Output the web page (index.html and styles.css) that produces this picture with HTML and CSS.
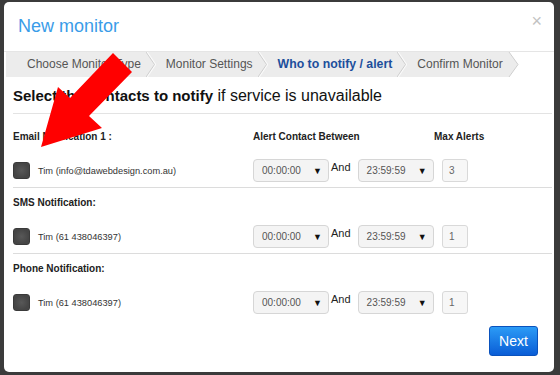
FILE: index.html
```html
<!DOCTYPE html>
<html lang="en">
<head>
    <meta charset="UTF-8">
    <title>New monitor</title>
    <link rel="stylesheet" href="styles.css">
</head>
<body>

    <div class="modal">
        <div class="modal-header">
            <h4 class="modal-title">New monitor</h4>
            <span class="close">&times;</span>
        </div>

        <!-- wizard steps -->
        <div class="crumbs">
            <span class="step first">Choose Monitor Type</span>
            <svg class="sep" width="10" height="25" viewBox="0 0 10 25"><polyline points="1,0 9.5,12.5 1,25" class="hi"/><polyline points="0,0 8.5,12.5 0,25" class="lo"/></svg>
            <span class="step">Monitor Settings</span>
            <svg class="sep" width="10" height="25" viewBox="0 0 10 25"><polyline points="1,0 9.5,12.5 1,25" class="hi"/><polyline points="0,0 8.5,12.5 0,25" class="lo"/></svg>
            <span class="step active">Who to notify / alert</span>
            <svg class="sep" width="10" height="25" viewBox="0 0 10 25"><polyline points="1,0 9.5,12.5 1,25" class="hi"/><polyline points="0,0 8.5,12.5 0,25" class="lo"/></svg>
            <span class="step">Confirm Monitor</span>
            <svg class="tip" width="11" height="25" viewBox="0 0 11 25"><polygon points="0,0 1,0 10,12.5 1,25 0,25"/><polyline points="1,0 10,12.5 1,25" class="lo"/></svg>
        </div>

        <div class="modal-body">
            <h3 class="lead"><b>Select the contacts to notify</b> if service is unavailable</h3>

            <div class="section first">
                <div class="cols labels">
                    <span>Email Notification 1 :</span>
                    <span>Alert Contact Between</span>
                    <span>Max Alerts</span>
                </div>
                <div class="cols controls">
                    <label class="who"><span class="check"></span>Tim (info@tdawebdesign.com.au)</label>
                    <div class="times">
                        <span class="select">00:00:00<i>&#9660;</i></span>
                        <span class="and">And</span>
                        <span class="select">23:59:59<i>&#9660;</i></span>
                    </div>
                    <span class="num">3</span>
                </div>
            </div>

            <div class="section">
                <div class="cols labels">
                    <span>SMS Notification:</span>
                </div>
                <div class="cols controls">
                    <label class="who"><span class="check"></span>Tim (61 438046397)</label>
                    <div class="times">
                        <span class="select">00:00:00<i>&#9660;</i></span>
                        <span class="and">And</span>
                        <span class="select">23:59:59<i>&#9660;</i></span>
                    </div>
                    <span class="num">1</span>
                </div>
            </div>

            <div class="section last">
                <div class="cols labels">
                    <span>Phone Notification:</span>
                </div>
                <div class="cols controls">
                    <label class="who"><span class="check"></span>Tim (61 438046397)</label>
                    <div class="times">
                        <span class="select">00:00:00<i>&#9660;</i></span>
                        <span class="and">And</span>
                        <span class="select">23:59:59<i>&#9660;</i></span>
                    </div>
                    <span class="num">1</span>
                </div>
            </div>

            <div class="modal-footer">
                <button class="btn">Next</button>
            </div>
        </div>
    </div>

    <!-- red pointer drawn over the dialog -->
    <svg class="arrow" width="560" height="375" viewBox="0 0 560 375">
        <polygon points="113,53 132,72 89,116 102,128 41,147 58,87 70,98"/>
    </svg>

</body>
</html>
```

FILE: styles.css
```css
* {
    box-sizing: border-box;
}

body {
    margin: 0;
    width: 560px;
    height: 375px;
    overflow: hidden;
    background-color: #3b3b3b;
    font-family: "Liberation Sans", Arial, sans-serif;
    color: #222;
}

.modal {
    width: 550px;
    height: 370px;
    margin: 2px 0 0 4px;
    background-color: #fff;
    border-radius: 5px;
}

.modal-header {
    height: 50px;
    padding: 0 12px 0 14px;
    border-bottom: 1px solid #e5e5e5;
    display: flex;
    justify-content: space-between;
    align-items: center;
}

.modal-title {
    margin: 0;
    font-size: 18px;
    font-weight: normal;
    line-height: 49px;
    color: #3a9ce8;
}

.close {
    font-size: 18px;
    color: #c2c2c2;
    margin-bottom: 10px;
}

/* wizard steps */
.crumbs {
    display: flex;
    width: fit-content;
    height: 25px;
    margin-left: 2px;
}

.step {
    background-color: #ececec;
    line-height: 25px;
    font-size: 12px;
    color: #555;
    padding: 0 5px 0 10px;
    white-space: nowrap;
}

.step.first { padding-left: 21px; }

.step.active {
    font-weight: bold;
    font-size: 12.3px;
    color: #1d4f9c;
}

.sep {
    display: block;
    background-color: #ececec;
}

.sep polyline, .tip polyline {
    fill: none;
}

.hi { stroke: #fafafa; stroke-width: 1.5; }
.lo { stroke: #cfcfcf; stroke-width: 1; }

.tip { display: block; }
.tip polygon { fill: #ececec; }

.modal-body {
    padding: 0 2px 0 9px;
}

.lead {
    margin: 0;
    padding: 8px 0 6px;
    line-height: 22px;
    font-size: 16px;
    font-weight: normal;
    color: #111;
    border-bottom: 1px solid #e3e3e3;
}

.lead b { font-size: 15px; }

.section {
    padding: 8px 0 5px;
    border-bottom: 1px solid #dcdcdc;
}

.section.first { padding-top: 16px; }
.section.last { border-bottom: none; }

.cols {
    display: grid;
    grid-template-columns: 240px 181px auto;
}

.labels {
    line-height: 14px;
    font-size: 10px;
    font-weight: bold;
    color: #222;
}

.controls {
    margin-top: 15px;
    height: 23px;
    align-items: center;
}

.who {
    display: flex;
    align-items: center;
    gap: 8px;
    font-size: 9.25px;
    color: #333;
}

.check {
    width: 17px;
    height: 17px;
    border-radius: 3px;
    border: 1px solid #3a3a3a;
    background: radial-gradient(circle, #585858 0, #454545 70%);
}

.times {
    display: flex;
    height: 23px;
}

.select {
    width: 76px;
    height: 23px;
    padding: 0 6px 0 8px;
    display: flex;
    justify-content: space-between;
    align-items: center;
    background-color: #f4f4f4;
    border: 1px solid #d6d6d6;
    border-radius: 4px;
    font-size: 10px;
    color: #555;
}

.select i {
    font-style: normal;
    font-size: 9px;
    color: #111;
}

.and {
    margin: 0 7px 0 2px;
    line-height: 16px;
    font-size: 11px;
    color: #222;
}

.num {
    width: 26px;
    height: 23px;
    margin-left: 8px;
    padding-left: 6px;
    line-height: 21px;
    background-color: #f7f7f7;
    border: 1px solid #d9d9d9;
    border-radius: 3px;
    font-size: 10px;
    color: #666;
}

.modal-footer {
    padding: 7px 14px 0 0;
    text-align: right;
}

.btn {
    width: 49px;
    height: 30px;
    padding: 0;
    background: linear-gradient(#2b9bf6, #0a5dd6);
    border: 1px solid #0a52bd;
    border-radius: 3px;
    font-family: "Liberation Sans", Arial, sans-serif;
    font-size: 14px;
    color: #fff;
}

.arrow {
    position: absolute;
    top: 0;
    left: 0;
    pointer-events: none;
}

.arrow polygon { fill: #f00; }
```
